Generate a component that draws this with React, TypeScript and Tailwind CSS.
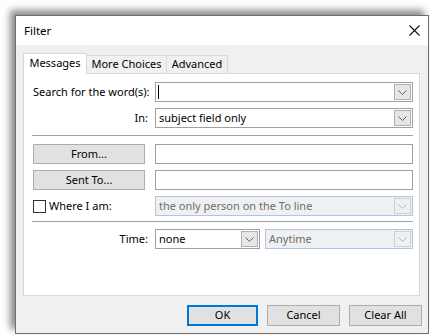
import React from 'react'

function Chevron({ disabled }: { disabled?: boolean }) {
  return (
    <svg width="9" height="5" viewBox="0 0 9 5" fill="none" stroke={disabled ? '#b5b5b5' : '#606060'} strokeWidth="1">
      <path d="M0.5 0.5 L4.5 4.5 L8.5 0.5" />
    </svg>
  )
}

function Select({ value, disabled, className }: { value?: string; disabled?: boolean; className?: string }) {
  return (
    <div
      className={
        'h-[20px] flex items-center border ' +
        (disabled ? 'border-[#a9c7e8] bg-[#f0f0f0] text-[#6d6d6d] ' : 'border-[#a0a0a0] bg-white text-black ') +
        (className ?? '')
      }
    >
      <span className="flex-1 pl-[3px] leading-[18px] whitespace-nowrap">{value}</span>
      <div
        className={
          'w-[17px] h-[16px] mr-[1px] flex items-center justify-center border ' +
          (disabled ? 'border-[#d0d0d0] bg-[#f0f0f0]' : 'border-[#b0b0b0] bg-[#e6e6e6]')
        }
      >
        <Chevron disabled={disabled} />
      </div>
    </div>
  )
}

function TextBox() {
  return <div className="h-[20px] flex-1 border border-[#a0a0a0] bg-white" />
}

function Button({ label, primary, className }: { label: string; primary?: boolean; className?: string }) {
  return (
    <div
      className={
        'flex items-center justify-center bg-[#e1e1e1] whitespace-nowrap ' +
        (primary ? 'border-2 border-[#0078d7] ' : 'border border-[#adadad] ') +
        (className ?? '')
      }
    >
      {label}
    </div>
  )
}

export default function App() {
  return (
    <div
      className="w-[430px] h-[335px] bg-white pt-[15px] pl-[15px] overflow-hidden text-[11px] text-black"
      style={{ fontFamily: '"Noto Sans", "Segoe UI", sans-serif' }}
    >
      <div className="w-[414px] h-[319px] border border-[#6e6e6e] flex flex-col shadow-[-5px_-5px_7px_rgba(0,0,0,0.45)]">
        {/* Title bar */}
        <div className="h-[29px] bg-white flex items-center justify-between pl-[8px] pr-[8px] shrink-0">
          <span className="text-[11.5px]">Filter</span>
          <svg width="11" height="11" viewBox="0 0 11 11" stroke="#111" strokeWidth="1.1">
            <path d="M0.5 0.5 L10.5 10.5 M10.5 0.5 L0.5 10.5" />
          </svg>
        </div>

        {/* Body */}
        <div className="flex-1 bg-[#f0f0f0] flex flex-col pl-[7px] pr-[7px] pt-[8px]">
          {/* Tabs */}
          <div className="flex items-end h-[21px] relative z-10 whitespace-nowrap">
            <div className="h-[21px] w-[64px] bg-white border border-b-0 border-[#d9d9d9] flex items-center justify-center pb-[1px]">
              Messages
            </div>
            <div className="h-[18px] w-[80px] bg-[#f0f0f0] border border-l-0 border-b-0 border-[#d9d9d9] flex items-center justify-center mb-[1px]">
              More Choices
            </div>
            <div className="h-[18px] w-[61px] bg-[#f0f0f0] border border-l-0 border-b-0 border-[#d9d9d9] flex items-center justify-center mb-[1px]">
              Advanced
            </div>
          </div>

          {/* Panel */}
          <div className="-mt-[1px] w-[397px] h-[223px] bg-white border border-[#d9d9d9] pl-[9px] pr-[6px] pt-[8px] flex flex-col">
            <div className="flex items-center h-[20px]">
              <span className="w-[122px] shrink-0 whitespace-nowrap">Search for the word(s):</span>
              <div className="flex-1 h-[20px] flex items-center border border-[#a0a0a0] bg-white">
                <div className="flex-1 pl-[2px] flex items-center">
                  <div className="w-[1px] h-[14px] bg-black" />
                </div>
                <div className="w-[17px] h-[16px] mr-[1px] flex items-center justify-center border border-[#b0b0b0] bg-[#e6e6e6]">
                  <Chevron />
                </div>
              </div>
            </div>

            <div className="flex items-center h-[20px] mt-[6px]">
              <span className="w-[122px] shrink-0 text-right pr-[7px]">In:</span>
              <Select value="subject field only" className="flex-1" />
            </div>

            <div className="h-[1px] bg-[#a0a0a0] mt-[7px] mb-[8px] -ml-[1px]" />

            <div className="flex items-center h-[20px]">
              <Button label="From..." className="w-[112px] h-[20px] mr-[10px]" />
              <TextBox />
            </div>

            <div className="flex items-center h-[20px] mt-[6px]">
              <Button label="Sent To..." className="w-[112px] h-[20px] mr-[10px]" />
              <TextBox />
            </div>

            <div className="flex items-center h-[20px] mt-[6px]">
              <div className="w-[122px] shrink-0 flex items-center whitespace-nowrap">
                <div className="w-[13px] h-[13px] border border-[#333] bg-white mr-[3px]" />
                <span>Where I am:</span>
              </div>
              <Select value="the only person on the To line" disabled className="flex-1" />
            </div>

            <div className="h-[1px] bg-[#a0a0a0] mt-[5px] mb-[7px] -ml-[1px]" />

            <div className="flex items-center h-[20px]">
              <span className="w-[122px] shrink-0 text-right pr-[7px]">Time:</span>
              <Select value="none" className="w-[105px] mr-[5px]" />
              <Select value="Anytime" disabled className="flex-1" />
            </div>
          </div>

          {/* Footer buttons */}
          <div className="flex justify-end gap-[9px] mt-[9px] -mr-[1px]">
            <Button label="OK" primary className="w-[71px] h-[21px]" />
            <Button label="Cancel" className="w-[73px] h-[21px]" />
            <Button label="Clear All" className="w-[73px] h-[21px]" />
          </div>
        </div>
      </div>
    </div>
  )
}
